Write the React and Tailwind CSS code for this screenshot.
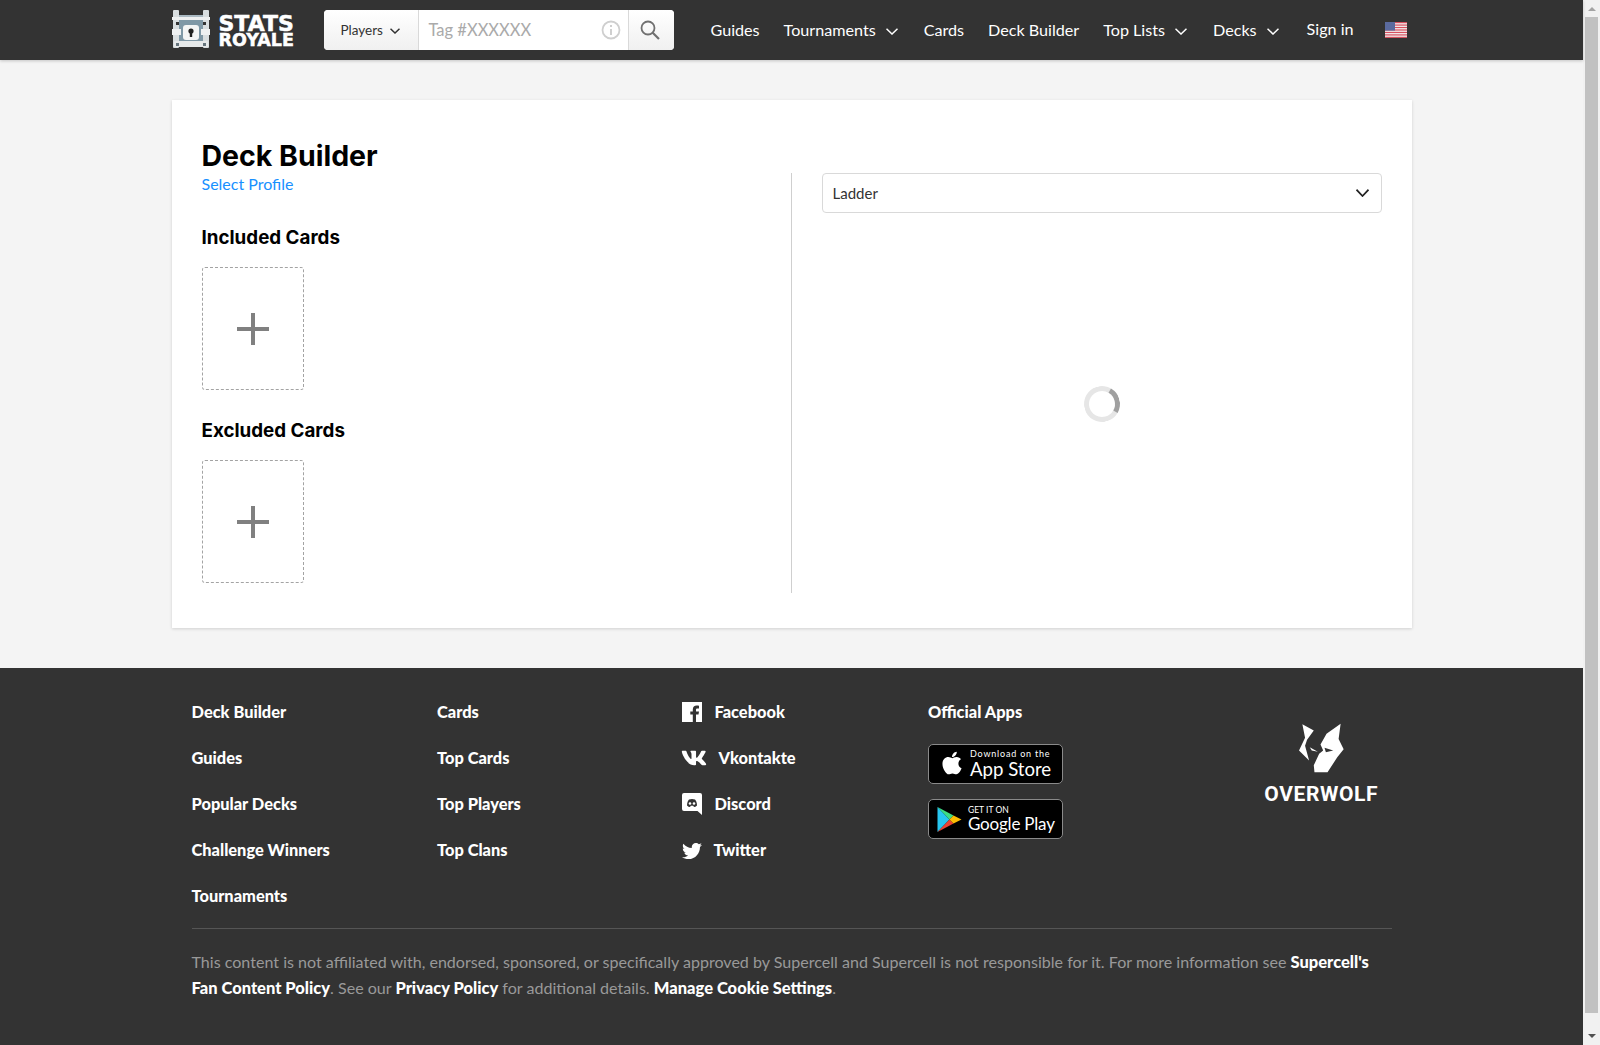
import React from "react";
import { FaVk, FaTwitter, FaApple } from "react-icons/fa";

const font = { fontFamily: "Lato, 'Open Sans', sans-serif" };

function Chev({ w = 12, h = 7, color = "#fff", sw = 1.5, className = "" }) {
  return (
    <svg width={w} height={h} viewBox={`0 0 ${w} ${h}`} fill="none" stroke={color} strokeWidth={sw} className={`shrink-0 ${className}`}>
      <path d={`M0.5 0.700L${w / 2} ${h - 1}L${w - 0.5} 0.700`} />
    </svg>
  );
}

function Chest() {
  return (
    <svg width="38" height="40" viewBox="0 0 38 40" className="shrink-0">
      <rect x="5" y="5" width="28" height="27" fill="#7f98a6" />
      <rect x="5" y="5" width="28" height="4" fill="#aab9c2" />
      <rect x="1" y="0" width="6" height="38" rx="1" fill="#d9dee0" />
      <rect x="31" y="0" width="6" height="38" rx="1" fill="#d9dee0" />
      <rect x="0" y="7" width="38" height="3" fill="#eef0f1" />
      <rect x="0" y="19" width="9" height="6" fill="#eef0f1" />
      <rect x="29" y="19" width="9" height="6" fill="#eef0f1" />
      <rect x="2" y="31" width="34" height="6" rx="1" fill="#e6e9ea" />
      <rect x="4" y="33" width="3" height="3" fill="#65747c" />
      <rect x="31" y="33" width="3" height="3" fill="#65747c" />
      <rect x="4" y="12" width="3" height="3" fill="#333" />
      <rect x="31" y="12" width="3" height="3" fill="#333" />
      <rect x="11" y="15" width="16" height="15" rx="3" fill="#f4f5f5" />
      <circle cx="19" cy="21" r="2.600" fill="#222" />
      <rect x="17.800" y="21" width="2.400" height="6" fill="#222" />
    </svg>
  );
}

function Flag() {
  const stripes = [0, 1, 2, 3, 4, 5, 6];
  return (
    <svg width="22" height="16" viewBox="0 0 22 16">
      <rect width="22" height="16" fill="#f4f4f4" />
      {stripes.map((i) => (
        <rect key={i} y={i * 2.46} width="22" height="1.230" fill="#d6505f" />
      ))}
      <rect width="10" height="8.600" fill="#5a6a9e" />
    </svg>
  );
}

function NavItem({ children, chev, up, after = "" }) {
  return (
    <a className={`flex items-center text-white text-[16.150px] whitespace-nowrap ${up ? "-mt-[2px]" : ""}`}>
      {children}
      {chev && <Chev className={`ml-[10px] mt-[2px] ${after}`} />}
    </a>
  );
}

function AddBox() {
  return (
    <div className="w-[102px] h-[123px] border border-dashed border-[#a3a3a3] rounded-[3px] flex items-center justify-center">
      <svg width="32" height="32" viewBox="0 0 32 32">
        <rect x="14" y="0" width="4" height="32" fill="#808080" />
        <rect x="0" y="14" width="32" height="4" fill="#808080" />
      </svg>
    </div>
  );
}

function FootLink({ children }) {
  return <a className="block h-[46px] text-white font-black text-[16.400px] leading-[26px] whitespace-nowrap">{children}</a>;
}

function Social({ icon, label, gap }) {
  return (
    <a className="flex h-[46px] items-start text-white font-black text-[16.400px] leading-[26px] whitespace-nowrap">
      <span className="w-[20px] h-[26px] flex items-center justify-start shrink-0">{icon}</span>
      <span className={gap}>{label}</span>
    </a>
  );
}

function Facebook() {
  return (
    <svg width="20" height="20" viewBox="0 0 20 20" className="shrink-0 -ml-[1px]">
      <path d="M0 0H20V20H14V12.500H16.500L17 9.500H14V7.800C14 6.900 14.400 6.400 15.500 6.400H17V3.700C16.300 3.600 15.500 3.500 14.700 3.500C12.300 3.500 10.800 5 10.800 7.400V9.500H8.300V12.500H10.800V20H0Z" fill="#fff" />
    </svg>
  );
}

function Discord() {
  return (
    <svg width="20" height="22" viewBox="0 0 20 22" className="shrink-0 -ml-[1px]">
      <path d="M2 0H18a2 2 0 0 1 2 2V22L15.500 18H2a2 2 0 0 1-2-2V2a2 2 0 0 1 2-2Z" fill="#fff" />
      <path d="M5 12.500c0-3 1-5 2-6 2-.8 4-.8 6 0 1 1 2 3 2 6-1 1-2 1.500-3 1.500l-.8-1.200h-2.400L8 14c-1 0-2-.5-3-1.500Z" fill="#333" />
      <circle cx="8" cy="10.500" r="1.300" fill="#fff" />
      <circle cx="12" cy="10.500" r="1.300" fill="#fff" />
    </svg>
  );
}

function PlayIcon() {
  return (
    <svg width="25" height="27" viewBox="0 0 24 27" className="shrink-0">
      <path d="M0 1V26L12 13.500Z" fill="#27c6f0" />
      <path d="M0 1L16 9.500L12 13.500Z" fill="#3ddc84" />
      <path d="M0 26L16 17.500L12 13.500Z" fill="#ea4335" />
      <path d="M16 9.500L24 13.500L16 17.500L12 13.500Z" fill="#fbbc04" />
    </svg>
  );
}

function Wolf() {
  return (
    <svg width="47" height="52" viewBox="205 65 140 155" fill="#fff">
      <path d="M218 72L252 90L232 118L226 136L238 180L208 150L226 112Z" />
      <path d="M240 140L264 154L246 150Z" />
      <path d="M332 70L326 116L341 146L322 170L293 215L254 215L252 194L268 160L280 150L272 132L290 100Z" />
      <path d="M284 142L310 150L288 155Z" fill="#333" />
    </svg>
  );
}

export default function App() {
  return (
    <div className="flex h-[1045px] overflow-hidden bg-[#f4f4f4]" style={font}>
      <div className="flex-1 min-w-0 flex flex-col">
        <header className="h-[60px] shrink-0 bg-[#333333] shadow-[0_1px_3px_rgba(0,0,0,0.2)] relative">
          <div className="w-[1240px] mx-auto h-full flex items-center">
            <div className="w-[152px] flex items-center shrink-0">
              <Chest />
              <div className="ml-[9px] mt-[4px] text-white font-bold leading-[17px] [-webkit-text-stroke:0.5px_white]" style={{ fontFamily: "'DejaVu Sans', sans-serif" }}>
                <div className="text-[22px]">STATS</div>
                <div className="text-[17.500px]">ROYALE</div>
              </div>
            </div>
            <div className="w-[350px] h-[40px] rounded-[4px] bg-white flex items-stretch shrink-0 overflow-hidden">
              <div className="w-[95px] bg-gradient-to-b from-white to-[#f0f0f0] border-r border-[#d9d9d9] flex items-center pl-[17px] text-[13.500px] text-[#333]">
                Players
                <Chev w={10} h={6} color="#333" className="ml-[7px] mt-[2px]" />
              </div>
              <div className="flex-1 flex items-center pl-[10px] pr-[6px] text-[16.500px] text-[#aaaaaa]">
                <span className="flex-1 mt-[1px]">Tag #XXXXXX</span>
                <svg width="20" height="20" viewBox="0 0 20 20" fill="none" stroke="#cfcfcf" strokeWidth="1.800" className="-ml-[1px] mr-[1px]">
                  <circle cx="10" cy="10" r="8.500" />
                  <path d="M10 9V15M10 5V7" strokeWidth="2" />
                </svg>
              </div>
              <div className="w-[46px] bg-gradient-to-b from-white to-[#f0f0f0] border-l border-[#d9d9d9] flex items-center justify-center">
                <svg width="20" height="20" viewBox="0 0 20 20" fill="none" stroke="#707070" strokeWidth="1.800" className="-ml-[2px]">
                  <circle cx="8" cy="8" r="6.500" />
                  <path d="M12.500 12.500L19 19" strokeWidth="2.200" />
                </svg>
              </div>
            </div>
            <nav className="ml-[37px] mt-[1px] flex items-center gap-x-[24px]">
              <NavItem>Guides</NavItem>
              <NavItem chev after="mr-[2px]">Tournaments</NavItem>
              <NavItem>Cards</NavItem>
              <NavItem>Deck Builder</NavItem>
              <NavItem chev after="mr-[2px]">Top Lists</NavItem>
              <NavItem chev after="mr-[4px]">Decks</NavItem>
              <NavItem up>Sign in</NavItem>
              <span className="ml-[7px] -mt-[1px] flex"><Flag /></span>
            </nav>
          </div>
        </header>

        <main className="w-[1240px] mx-auto mt-[40px] h-[528px] shrink-0 bg-white shadow-[0_1px_3px_rgba(0,0,0,0.15)] px-[30px] pt-[36px] flex">
          <div className="w-[589px] shrink-0">
            <h1 className="mt-[3px] text-[28.500px] leading-[34px] font-bold text-black" style={{ fontFamily: "Inter, sans-serif" }}>Deck Builder</h1>
            <a className="block text-[16px] leading-[22px] text-[#1890ff]">Select Profile</a>
            <h2 className="mt-[31px] text-[18.800px] leading-[24px] font-bold text-black" style={{ fontFamily: "Inter, sans-serif" }}>Included Cards</h2>
            <div className="mt-[17px]"><AddBox /></div>
            <h2 className="mt-[29px] text-[18.800px] leading-[24px] font-bold text-black" style={{ fontFamily: "Inter, sans-serif" }}>Excluded Cards</h2>
            <div className="mt-[17px]"><AddBox /></div>
          </div>
          <div className="w-px h-[420px] mt-[37px] bg-[#cfcfcf] shrink-0" />
          <div className="flex-1 mt-[37px] ml-[30px] flex flex-col">
            <div className="h-[40px] border border-[#d9d9d9] rounded-[4px] flex items-center justify-between pl-[10px] pr-[12px] text-[15px] text-[#333]">
              Ladder
              <Chev w={13} h={8} color="#222" sw={1.700} />
            </div>
            <div className="flex justify-center mt-[173px]">
              <div className="w-[36px] h-[36px] rounded-full border-[5px] border-[#e6e6e6] border-r-[#a0a0a0] -rotate-[15deg]" />
            </div>
          </div>
        </main>

        <footer className="mt-[40px] flex-1 bg-[#333333]">
          <div className="w-[1200px] mx-auto pt-[31px]">
            <div className="flex h-[229px]">
              <div className="w-[245.500px] shrink-0">
                <FootLink>Deck Builder</FootLink>
                <FootLink>Guides</FootLink>
                <FootLink>Popular Decks</FootLink>
                <FootLink>Challenge Winners</FootLink>
                <FootLink>Tournaments</FootLink>
              </div>
              <div className="w-[245.500px] shrink-0">
                <FootLink>Cards</FootLink>
                <FootLink>Top Cards</FootLink>
                <FootLink>Top Players</FootLink>
                <FootLink>Top Clans</FootLink>
              </div>
              <div className="w-[245.500px] shrink-0">
                <Social icon={<Facebook />} label="Facebook" gap="ml-[12px]" />
                <Social icon={<FaVk size={26} className="text-white shrink-0 -ml-[2px]" />} label="Vkontakte" gap="ml-[16px]" />
                <Social icon={<Discord />} label="Discord" gap="ml-[12px]" />
                <Social icon={<FaTwitter size={20} className="text-white shrink-0 mt-[2px] -ml-[1px]" />} label="Twitter" gap="ml-[11px]" />
              </div>
              <div className="w-[200px] shrink-0">
                <div className="text-white font-black text-[16.400px] leading-[26px] whitespace-nowrap">Official Apps</div>
                <div className="mt-[19px] w-[135px] h-[40px] bg-black border border-[#8a8a8a] rounded-[5px] flex items-center pl-[10px] text-white">
                  <FaApple size={26} className="shrink-0 -mt-[2px]" />
                  <div className="ml-[5px] whitespace-nowrap">
                    <div className="text-[9px] leading-[10px] tracking-[0.8px]">Download on the</div>
                    <div className="text-[18.600px] leading-[20px]">App Store</div>
                  </div>
                </div>
                <div className="mt-[15px] w-[135px] h-[40px] bg-black border border-[#8a8a8a] rounded-[5px] flex items-center pl-[8px] text-white">
                  <PlayIcon />
                  <div className="ml-[6px] whitespace-nowrap">
                    <div className="text-[8.500px] leading-[10px]">GET IT ON</div>
                    <div className="text-[17px] leading-[18px] tracking-[-0.2px]">Google Play</div>
                  </div>
                </div>
              </div>
              <div className="flex-1 flex flex-col items-center pt-[23px] pl-[123px]">
                <Wolf />
                <div className="mt-[7px] text-white text-[21px] leading-[26px] font-bold tracking-[0.6px]" style={{ fontFamily: "'Roboto', sans-serif" }}>OVERWOLF</div>
              </div>
            </div>
            <div className="h-px bg-[#555555]" />
            <div className="mt-[20px] text-[16.070px] leading-[26px] text-[#999999]">
              <div className="whitespace-nowrap">
                This content is not affiliated with, endorsed, sponsored, or specifically approved by Supercell and Supercell is not responsible for it. For more information see{" "}
                <b className="text-white font-black text-[16.500px]">Supercell's</b>
              </div>
              <div className="whitespace-nowrap">
                <b className="text-white font-black text-[16.500px]">Fan Content Policy</b>. See our{" "}
                <b className="text-white font-black text-[16.500px]">Privacy Policy</b> for additional details.{" "}
                <b className="text-white font-black text-[16.500px]">Manage Cookie Settings</b>.
              </div>
            </div>
          </div>
        </footer>
      </div>

      <aside className="w-[17px] shrink-0 bg-[#f1f1f1] flex flex-col items-center pt-[7px] pb-[7px]">
        <div className="w-0 h-0 border-x-[4px] border-x-transparent border-b-[4px] border-b-[#a3a3a3]" />
        <div className="w-[13px] h-[996px] bg-[#c1c1c1] mt-[6px]" />
        <div className="mt-auto w-0 h-0 border-x-[4px] border-x-transparent border-t-[4px] border-t-[#505050]" />
      </aside>
    </div>
  );
}
